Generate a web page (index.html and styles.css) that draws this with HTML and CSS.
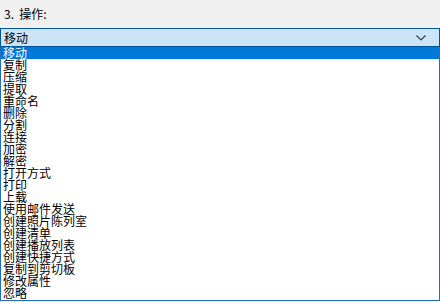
FILE: index.html
```html
<!DOCTYPE html>
<html lang="zh-CN">
<head>
    <meta charset="UTF-8">
    <title>操作</title>
    <link rel="stylesheet" href="styles.css">
</head>
<body>
    <div class="label">3.&nbsp; 操作:</div>
    <div class="combo">
        <span class="combo-value">移动</span>
        <svg class="chevron" width="10" height="6" viewBox="0 0 10 6">
            <path d="M0.5 0.5 L5 5 L9.5 0.5" fill="none" stroke="#3c3c3c" stroke-width="1.2"/>
        </svg>
    </div>
    <ul class="list">
        <li class="selected">移动</li>
        <li>复制</li>
        <li>压缩</li>
        <li>提取</li>
        <li>重命名</li>
        <li>删除</li>
        <li>分割</li>
        <li>连接</li>
        <li>加密</li>
        <li>解密</li>
        <li>打开方式</li>
        <li>打印</li>
        <li>上载</li>
        <li>使用邮件发送</li>
        <li>创建照片陈列室</li>
        <li>创建清单</li>
        <li>创建播放列表</li>
        <li>创建快捷方式</li>
        <li>复制到剪切板</li>
        <li>修改属性</li>
        <li>忽略</li>
    </ul>
</body>
</html>
```

FILE: styles.css
```css
body {
    margin: 0;
    background: #f0f0f0;
    font-family: "Noto Sans CJK SC", "Noto Sans", sans-serif;
    font-size: 12px;
    color: #000;
    width: 440px;
    height: 302px;
    overflow: hidden;
}
.label {
    height: 28px;
    line-height: 28px;
    padding-left: 4px;
    font-size: 12px;
}
.combo {
    display: flex;
    align-items: center;
    justify-content: space-between;
    height: 17px;
    border: 1px solid #005499;
    background: #cce4f7;
    padding: 0 13px 0 3px;
}
.combo-value {
    line-height: 17px;
}
.chevron {
    display: block;
}
.list {
    list-style: none;
    margin: 0;
    padding: 0;
    height: 253px;
    border: 1px solid #1f6fc0;
    border-top: none;
    background: #fff;
}
.list li {
    height: 12px;
    line-height: 12px;
    padding-left: 2px;
    white-space: nowrap;
}
.list li.selected {
    background: #0078d7;
    color: #fff;
}
```
